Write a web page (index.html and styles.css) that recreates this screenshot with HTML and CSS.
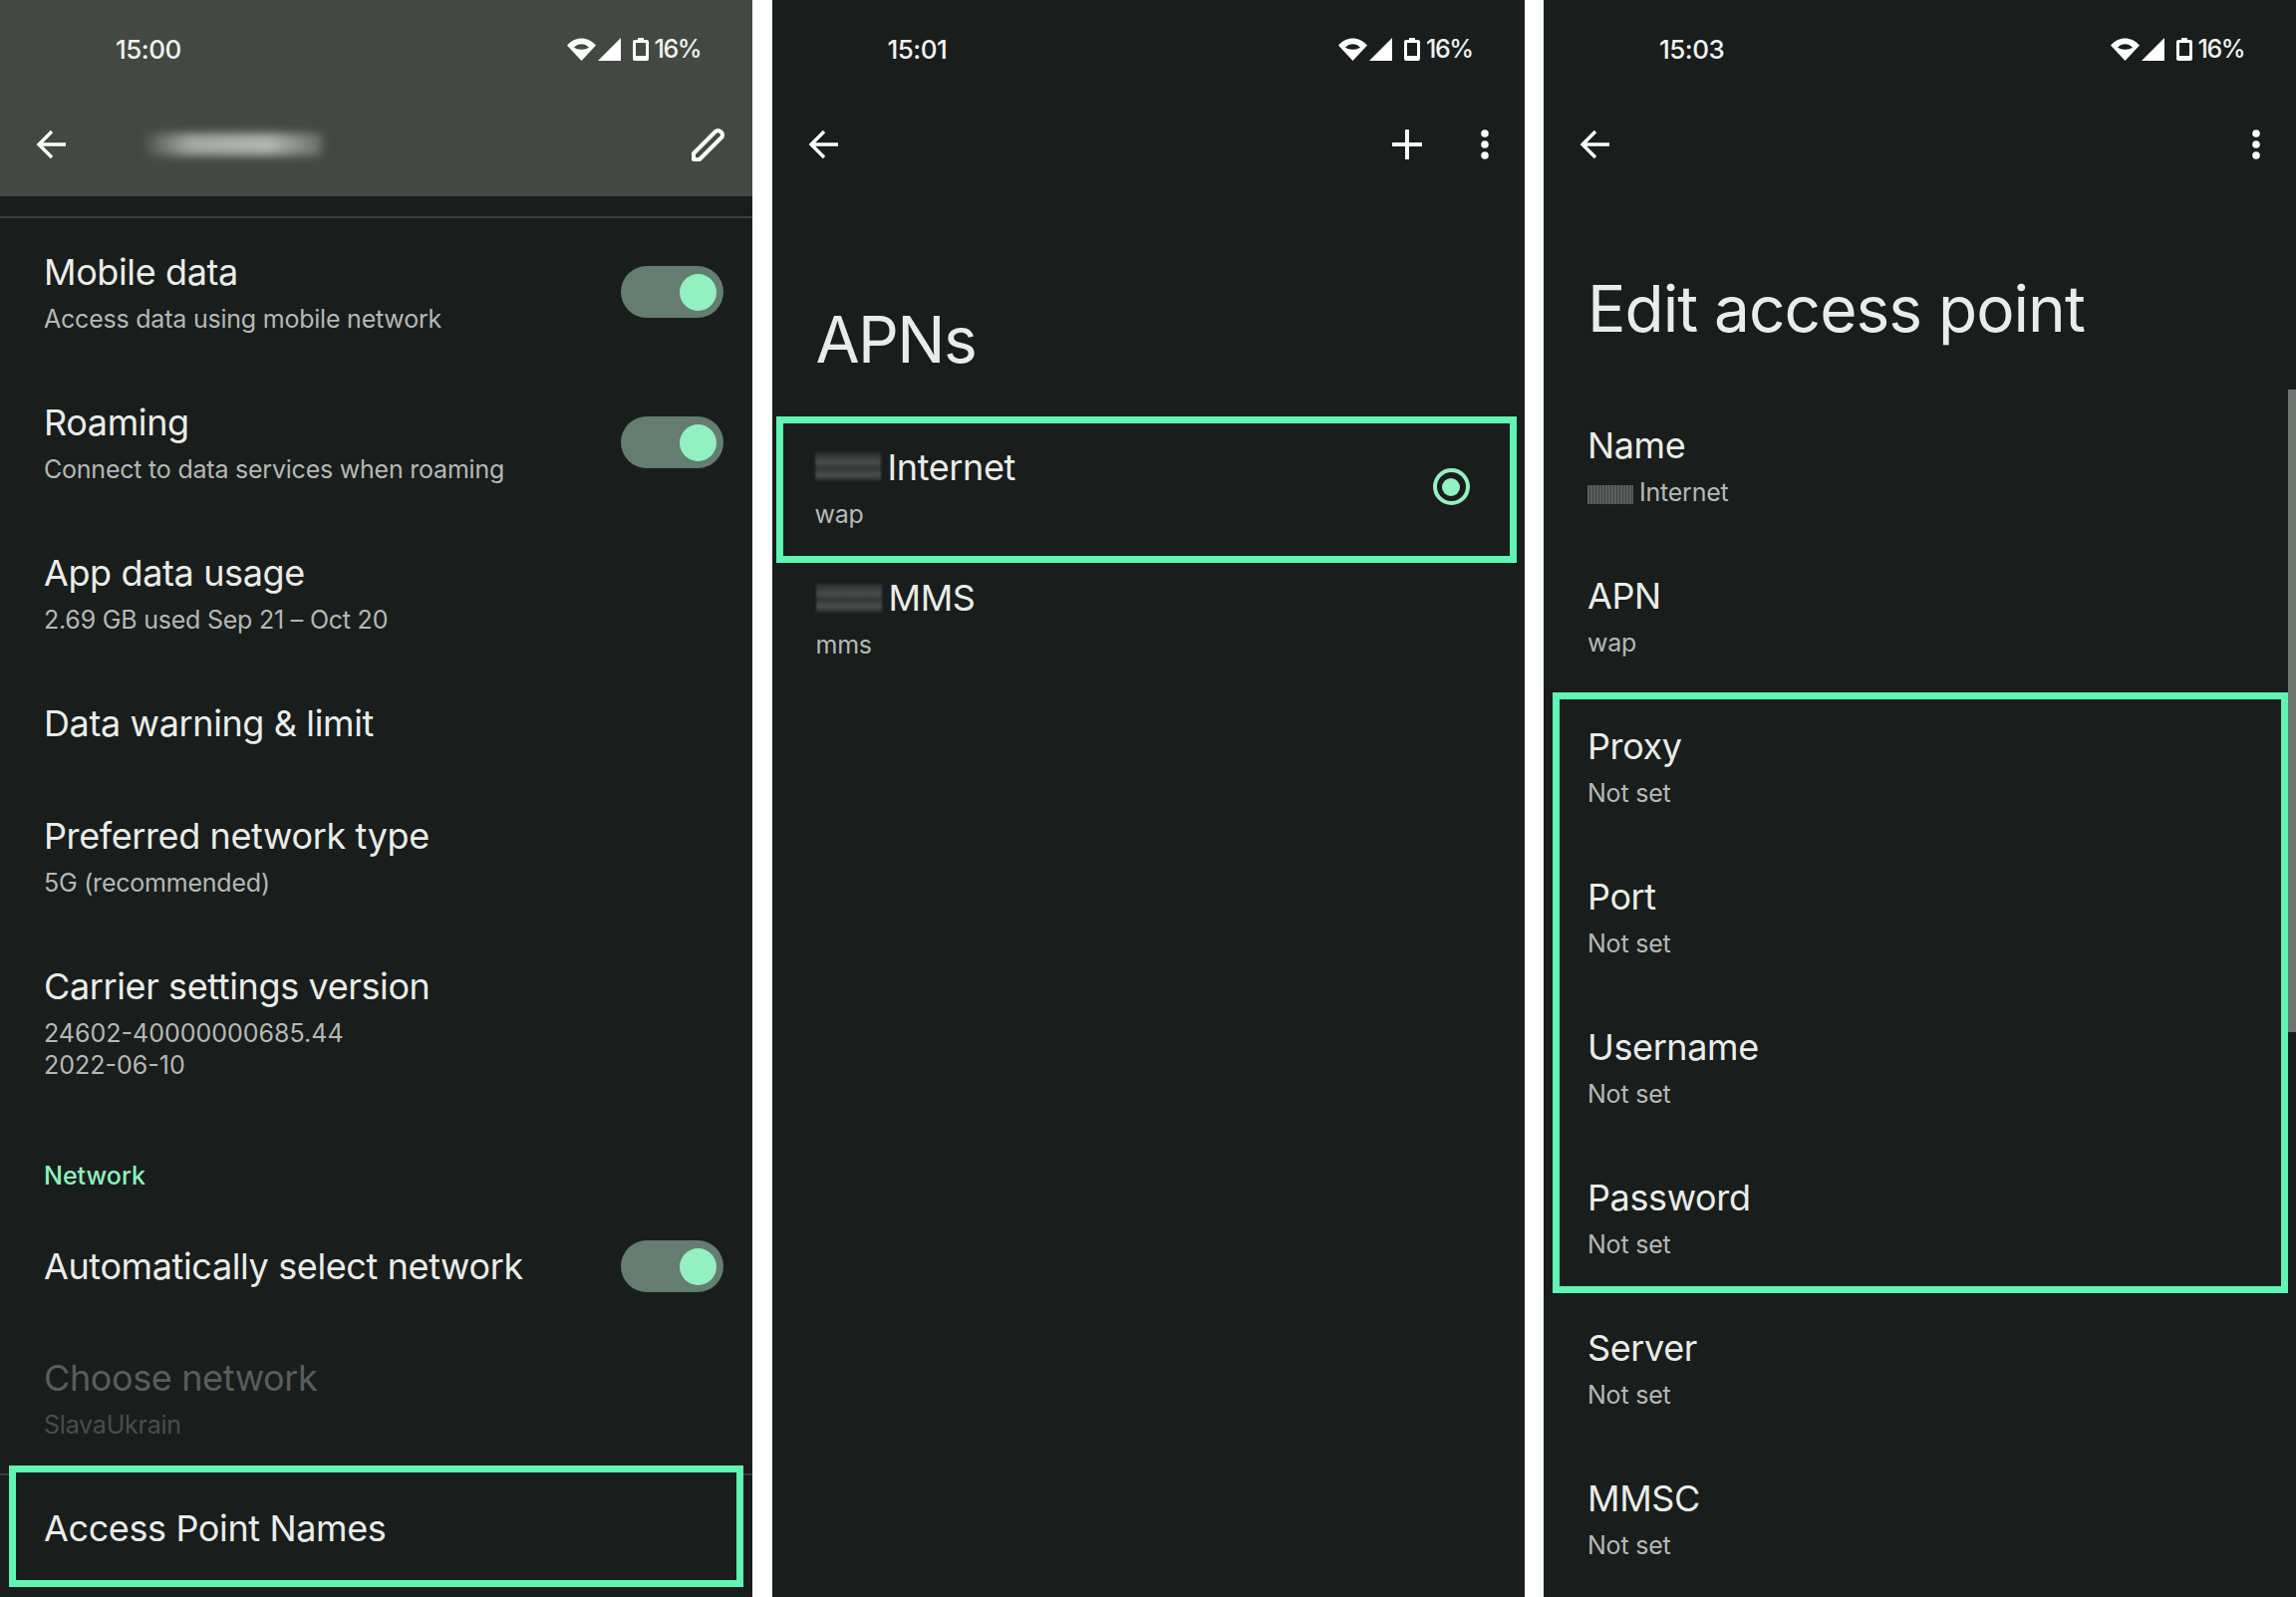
FILE: index.html
```html
<!DOCTYPE html>
<html lang="en">
<head>
<meta charset="utf-8">
<title>APN settings</title>
<link rel="stylesheet" href="styles.css">
</head>
<body>
<svg class="defs" width="0" height="0" aria-hidden="true">
  <symbol id="i-wifi" viewBox="0 0 29 23"><path fill-rule="evenodd" fill="#fff" d="M0 7.5C8-2 21-2 29 7.5L14.5 23ZM7 9.5C11 12.5 18 12.5 22 9.5 18 5 11 5 7 9.5Z"/></symbol>
  <symbol id="i-signal" viewBox="0 0 23 23"><path fill="#fff" d="M23 0V23H0Z"/></symbol>
  <symbol id="i-batt" viewBox="0 0 16 23"><path fill="#fff" fill-rule="evenodd" d="M5 0H11V2H14A2 2 0 0 1 16 4V21A2 2 0 0 1 14 23H2A2 2 0 0 1 0 21V4A2 2 0 0 1 2 2H5ZM3 5V18H13V5Z"/></symbol>
  <symbol id="i-back" viewBox="0 0 30 30"><path fill="none" stroke="#fff" stroke-width="3.4" d="M30 15H3M16 2 3 15 16 28"/></symbol>
  <symbol id="i-plus" viewBox="0 0 30 30"><path fill="none" stroke="#fff" stroke-width="4" d="M0 15H30M15 0V30"/></symbol>
  <symbol id="i-more" viewBox="0 0 8 30"><circle fill="#fff" cx="4" cy="4" r="3.8"/><circle fill="#fff" cx="4" cy="15" r="3.8"/><circle fill="#fff" cx="4" cy="26" r="3.8"/></symbol>
  <symbol id="i-edit" viewBox="0 0 34 34"><path fill="none" stroke="#fff" stroke-width="4" stroke-linejoin="round" d="M2 32V26L24 4A3.6 3.6 0 0 1 29 4L30 5A3.6 3.6 0 0 1 30 10L8 32Z"/></symbol>
</svg>

<main class="screens">

  <section class="phone">
    <div class="tinted">
      <div class="status">
        <span class="clock">15:00</span>
        <span class="status-icons">
          <svg class="ic-wifi"><use href="#i-wifi"/></svg>
          <svg class="ic-signal"><use href="#i-signal"/></svg>
          <svg class="ic-batt"><use href="#i-batt"/></svg>
          <span class="pct">16%</span>
        </span>
      </div>
      <div class="toolbar">
        <svg class="ic-back"><use href="#i-back"/></svg>
        <span class="smudge smudge-header"></span>
        <svg class="ic-edit"><use href="#i-edit"/></svg>
      </div>
    </div>
    <div class="rule rule-top"></div>

    <div class="row row-switch">
      <div>
        <div class="title">Mobile data</div>
        <div class="sub">Access data using mobile network</div>
      </div>
      <span class="switch"><span class="thumb"></span></span>
    </div>
    <div class="row row-switch">
      <div>
        <div class="title">Roaming</div>
        <div class="sub">Connect to data services when roaming</div>
      </div>
      <span class="switch"><span class="thumb"></span></span>
    </div>
    <div class="row">
      <div class="title">App data usage</div>
      <div class="sub">2.69 GB used Sep 21 – Oct 20</div>
    </div>
    <div class="row row-single">
      <div class="title">Data warning &amp; limit</div>
    </div>
    <div class="row">
      <div class="title">Preferred network type</div>
      <div class="sub">5G (recommended)</div>
    </div>
    <div class="row">
      <div class="title">Carrier settings version</div>
      <div class="sub sub-digits">24602-40000000685.44<br>2022-06-10</div>
    </div>
    <div class="section-label">Network</div>
    <div class="row row-switch row-auto">
      <div class="title">Automatically select network</div>
      <span class="switch"><span class="thumb"></span></span>
    </div>
    <div class="row row-disabled">
      <div class="title">Choose network</div>
      <div class="sub">SlavaUkrain</div>
    </div>
    <div class="rule rule-bottom"></div>
    <div class="mark mark-access">
      <div class="title">Access Point Names</div>
    </div>
  </section>

  <section class="phone">
    <div class="status">
      <span class="clock">15:01</span>
      <span class="status-icons">
        <svg class="ic-wifi"><use href="#i-wifi"/></svg>
        <svg class="ic-signal"><use href="#i-signal"/></svg>
        <svg class="ic-batt"><use href="#i-batt"/></svg>
        <span class="pct">16%</span>
      </span>
    </div>
    <div class="toolbar">
      <svg class="ic-back"><use href="#i-back"/></svg>
      <span class="spacer"></span>
      <svg class="ic-plus"><use href="#i-plus"/></svg>
      <svg class="ic-more"><use href="#i-more"/></svg>
    </div>
    <h1 class="page-title page-title-apns">APNs</h1>
    <div class="mark mark-apn">
      <div class="apn-text">
        <div class="title title-with-smudge"><span class="smudge smudge-apn"></span>Internet</div>
        <div class="sub">wap</div>
      </div>
      <span class="radio"><span class="radio-dot"></span></span>
    </div>
    <div class="apn-plain">
      <div class="title title-with-smudge"><span class="smudge smudge-apn"></span>MMS</div>
      <div class="sub">mms</div>
    </div>
  </section>

  <section class="phone">
    <div class="status">
      <span class="clock">15:03</span>
      <span class="status-icons">
        <svg class="ic-wifi"><use href="#i-wifi"/></svg>
        <svg class="ic-signal"><use href="#i-signal"/></svg>
        <svg class="ic-batt"><use href="#i-batt"/></svg>
        <span class="pct">16%</span>
      </span>
    </div>
    <div class="toolbar">
      <svg class="ic-back"><use href="#i-back"/></svg>
      <span class="spacer"></span>
      <svg class="ic-more"><use href="#i-more"/></svg>
    </div>
    <h1 class="page-title page-title-edit">Edit access point</h1>
    <div class="field">
      <div class="title">Name</div>
      <div class="sub"><span class="smudge smudge-name"></span>Internet</div>
    </div>
    <div class="field field-before-mark">
      <div class="title">APN</div>
      <div class="sub">wap</div>
    </div>
    <div class="mark mark-fields">
      <div class="field">
        <div class="title">Proxy</div>
        <div class="sub">Not set</div>
      </div>
      <div class="field">
        <div class="title">Port</div>
        <div class="sub">Not set</div>
      </div>
      <div class="field">
        <div class="title">Username</div>
        <div class="sub">Not set</div>
      </div>
      <div class="field">
        <div class="title">Password</div>
        <div class="sub">Not set</div>
      </div>
    </div>
    <div class="field">
      <div class="title">Server</div>
      <div class="sub">Not set</div>
    </div>
    <div class="field">
      <div class="title">MMSC</div>
      <div class="sub">Not set</div>
    </div>
    <div class="scrollbar"></div>
  </section>

</main>
</body>
</html>
```

FILE: styles.css
```css
* { box-sizing: border-box; }
html, body { margin: 0; height: 1603px; background: #fff; overflow: hidden; }
body { font-family: "Inter", "Liberation Sans", sans-serif; }
.defs { position: absolute; }

.screens { display: grid; grid-template-columns: 755px 755px 755px; column-gap: 19.5px; height: 1603px; }
.phone { position: relative; background: #191d1c; height: 1603px; overflow: hidden; color: #e9ede9; }
.tinted { background: #434843; height: 197px; }

/* status bar */
.status { display: flex; align-items: center; justify-content: space-between; height: 98px; padding: 0 52px 0 116px; }
.clock { font-size: 26px; font-weight: 500; letter-spacing: -0.5px; color: #f0f2f0; }
.status-icons { display: flex; align-items: center; }
.status-icons svg { display: block; }
.ic-wifi { width: 29px; height: 23px; margin-right: 2px; }
.ic-signal { width: 23px; height: 23px; margin-right: 12px; }
.ic-batt { width: 16px; height: 23px; margin-right: 6px; }
.pct { font-size: 25px; font-weight: 500; letter-spacing: -1.5px; color: #f0f2f0; }

/* toolbar */
.toolbar { display: flex; align-items: center; height: 94px; padding: 0 22px 0 36px; }
.toolbar svg { display: block; flex: none; }
.ic-back { width: 30px; height: 30px; }
.ic-edit { width: 34px; height: 34px; margin-left: auto; margin-right: 5px; }
.ic-plus { width: 30px; height: 30px; margin-right: 59px; }
.ic-more { width: 8px; height: 30px; margin-right: 14px; }
.spacer { flex: 1; }

/* smudges hide the carrier name */
.smudge { display: inline-block; flex: none; }
.smudge-header { width: 178px; height: 22px; margin-left: 79px; filter: blur(5px);
  background: linear-gradient(90deg, #4b504b 0, #a4a8a1 25%, #b4b7b0 70%, #6a6e68 100%); }
.smudge-apn { width: 66px; height: 29px; margin-right: 7px; filter: blur(1.2px);
  background:
    repeating-linear-gradient(90deg, rgba(25,29,28,.12) 0 1px, rgba(25,29,28,0) 1px 3px),
    linear-gradient(180deg, #2b2f2e 0, #4b4e4c 35%, #333736 55%, #4d504e 78%, #272b2a 100%); }
.smudge-name { width: 46px; height: 19px; margin-right: 6px; vertical-align: -3px;
  background: repeating-linear-gradient(90deg, #5c605d 0 2px, #3e4240 2px 3px); }

/* rows */
.rule { height: 2px; background: #393e3c; }
.rule-top { margin-top: 20px; margin-bottom: 31px; }
.row { margin: 0 29px 65px 44px; }
.row-switch { display: flex; align-items: center; justify-content: space-between; }
.row-single { margin-bottom: 67px; }
.row-auto { margin-bottom: 63px; }
.title { font-size: 36px; line-height: 46px; color: #e9ede9; letter-spacing: -0.38px; white-space: nowrap; }
.sub { font-size: 25px; line-height: 32px; margin-top: 8px; color: #b4b9b5; letter-spacing: -0.22px; white-space: nowrap; }
.sub-digits { letter-spacing: 0; }
.section-label { margin: 79px 44px 49px; font-size: 25px; line-height: 32px; font-weight: 500; color: #8ff0bf; letter-spacing: 0; }
.row-disabled { margin-bottom: 33px; }
.row-disabled .title { color: #595e5b; }
.row-disabled .sub { color: #484d4a; }
.rule-bottom { margin-bottom: -10px; }

.switch { flex: none; display: flex; align-items: center; justify-content: flex-end; width: 103px; height: 52px; padding-right: 7px; border-radius: 26px; background: #647d70; }
.thumb { width: 37px; height: 37px; border-radius: 50%; background: #93f0c0; }

/* green callouts */
.mark { position: relative; border: 7px solid #60f5b2; background: #191d1c; }
.mark-access { margin: 0 9px; height: 122px; padding: 33px 28px; }
.mark-apn { display: flex; align-items: center; justify-content: space-between; margin: 0 8px 0 4px; height: 147px; padding: 0 40px 6px 32px; }
.mark-fields { margin: 0 8.5px 32px 9px; height: 603px; padding-top: 24px; }

/* APN list */
.page-title { margin: 0; font-weight: 400; font-size: 64px; line-height: 80px; color: #e9ede9; letter-spacing: -1px; white-space: nowrap; }
.page-title-apns { margin: 109px 0 0 44px; height: 117px; letter-spacing: -1.6px; }
.page-title-edit { margin: 78px 0 0 44px; height: 154px; }
.title-with-smudge { display: flex; align-items: center; }
.apn-plain { margin: 12px 44px 0; }
.radio { flex: none; display: flex; align-items: center; justify-content: center; width: 37px; height: 37px; border: 4px solid #93f0c0; border-radius: 50%; }
.radio-dot { width: 18px; height: 18px; border-radius: 50%; background: #93f0c0; }

/* fields */
.field { margin: 0 0 65px 44px; }
.field-before-mark { margin-bottom: 34px; }
.mark-fields .field { margin-left: 28px; }
.mark-fields .field:last-child { margin-bottom: 0; }
.scrollbar { position: absolute; right: 0; top: 391px; width: 8px; height: 645px; background: #6f7672; }
```
